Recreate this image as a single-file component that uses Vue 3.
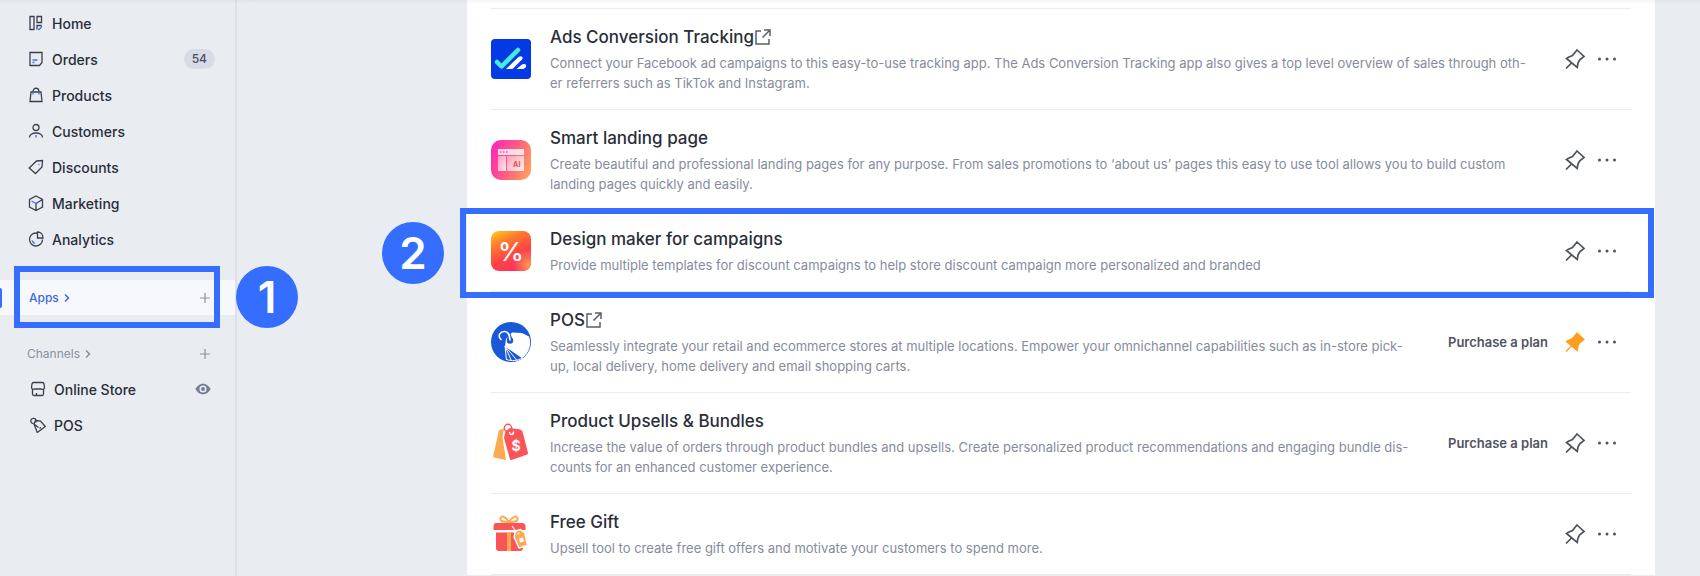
<script setup>
import { ref } from 'vue'

// Main navigation
const menu = [
  { id: 'home', label: 'Home' },
  { id: 'orders', label: 'Orders', count: 54 },
  { id: 'products', label: 'Products' },
  { id: 'customers', label: 'Customers' },
  { id: 'discounts', label: 'Discounts' },
  { id: 'marketing', label: 'Marketing' },
  { id: 'analytics', label: 'Analytics' }
]

// Installed apps, the descriptions keep their own line breaks
const apps = ref([
  {
    id: 'ads',
    name: 'Ads Conversion Tracking',
    external: true,
    text: 'Connect your Facebook ad campaigns to this easy-to-use tracking app. The Ads Conversion Tracking app also gives a top level overview of sales through oth-\ner referrers such as TikTok and Instagram.'
  },
  {
    id: 'landing',
    name: 'Smart landing page',
    text: 'Create beautiful and professional landing pages for any purpose. From sales promotions to ‘about us’ pages this easy to use tool allows you to build custom\nlanding pages quickly and easily.'
  },
  {
    id: 'design',
    name: 'Design maker for campaigns',
    step: 2,
    text: 'Provide multiple templates for discount campaigns to help store discount campaign more personalized and branded'
  },
  {
    id: 'pos',
    name: 'POS',
    external: true,
    plan: true,
    pinned: true,
    text: 'Seamlessly integrate your retail and ecommerce stores at multiple locations. Empower your omnichannel capabilities such as in-store pick-\nup, local delivery, home delivery and email shopping carts.'
  },
  {
    id: 'bundles',
    name: 'Product Upsells & Bundles',
    plan: true,
    text: 'Increase the value of orders through product bundles and upsells. Create personalized product recommendations and engaging bundle dis-\ncounts for an enhanced customer experience.'
  },
  {
    id: 'gift',
    name: 'Free Gift',
    text: 'Upsell tool to create free gift offers and motivate your customers to spend more.'
  }
])

const togglePin = (app) => {
  app.pinned = !app.pinned
}
</script>

<template>
  <div class="page">
    <aside class="sidebar">
      <nav class="menu">
        <a v-for="item in menu" :key="item.id" href="#" class="menu-item">
          <svg class="menu-icon" viewBox="0 0 16 16">
            <template v-if="item.id === 'home'">
              <path d="M2 1.500h4v13H2zM9 1.500h4.500v6H9zM9 14.500v-4h4.500" />
              <path class="accent" d="M13.500 10.500v1.500l-2.500 2.500h-1" />
            </template>
            <template v-else-if="item.id === 'orders'">
              <path d="M2 1.500h12v10l-2.500 3H2z" />
              <path class="accent" d="M4.500 9h5M4.500 11.500h2" />
            </template>
            <template v-else-if="item.id === 'products'">
              <path d="M3 5h10l1 9.500H2zM5 5c0-5 6-5 6 0" />
              <path class="accent" d="M5 5v2.500M11 5v2.500" />
            </template>
            <template v-else-if="item.id === 'customers'">
              <circle cx="8" cy="4.500" r="3" />
              <path d="M1.500 14.500c0-6 13-6 13 0" />
              <path class="accent" d="M8 12v2.500" />
            </template>
            <template v-else-if="item.id === 'discounts'">
              <path d="M8.500 2l6-.5-.5 6.500-6.500 6.500L1.200 9z" />
              <path class="accent" d="M10.500 5.500h1" />
            </template>
            <template v-else-if="item.id === 'marketing'">
              <path d="M8 1l6.500 3.500v7.500L8 15.500 1.500 12V4.500zM8 8.500v7M8 8.500l6.500-4" />
              <path class="accent" d="M3.500 6L8 8.500l2-1.200" />
            </template>
            <template v-else>
              <path d="M7.500 2a6.500 6.500 0 1 0 7 6.500M9.500 1v6h5.500c0-3.500-2-6-5.500-6zM7.500 2h2" />
              <path class="accent" d="M4 9.500c.5 1.500 1.500 2.500 3 2.800" />
            </template>
          </svg>
          <span>{{ item.label }}</span>
          <span v-if="item.count" class="count">{{ item.count }}</span>
        </a>
      </nav>

      <div class="section active">
        <a href="#" class="section-link">
          Apps
          <svg class="chevron" viewBox="0 0 8 10"><path d="M2 1.500L5.500 5 2 8.500" /></svg>
        </a>
        <button type="button" class="add" aria-label="Add app">
          <svg viewBox="0 0 12 12"><path d="M6 1v10M1 6h10" /></svg>
        </button>
        <div class="frame"></div>
        <span class="step">1</span>
      </div>

      <div class="section">
        <a href="#" class="section-link">
          Channels
          <svg class="chevron" viewBox="0 0 8 10"><path d="M2 1.500L5.500 5 2 8.500" /></svg>
        </a>
        <button type="button" class="add" aria-label="Add channel">
          <svg viewBox="0 0 12 12"><path d="M6 1v10M1 6h10" /></svg>
        </button>
      </div>

      <nav class="menu channels">
        <a href="#" class="menu-item">
          <svg class="menu-icon" viewBox="0 0 16 16">
            <path d="M3.500 1.500h9q1.200 0 1.400 1.200L14.500 6c0 2.200-1.500 2.700-3 2h-7c-1.500.7-3 .2-3-2l.6-3.300Q2.300 1.500 3.500 1.500zM2.500 8.500V13q0 1.500 1.500 1.500h8q1.500 0 1.500-1.500V8.500M6.500 14.500V12" />
          </svg>
          <span>Online Store</span>
          <svg class="eye" viewBox="0 0 18 14">
            <path d="M9 1c4 0 7 3 8.500 6C16 10 13 13 9 13S2 10 .5 7C2 4 5 1 9 1z" />
            <circle cx="9" cy="7" r="4" class="eye-ring" />
            <circle cx="9" cy="7" r="2.200" />
          </svg>
        </a>
        <a href="#" class="menu-item">
          <svg class="menu-icon" viewBox="0 0 16 16">
            <path d="M5.500 3.500l5 .5 4.800 5.500-8 6L4 7z" />
            <path d="M3.500 6.500C1 6.500.5 4.500 1 3c.8-2 4.500-2.200 5 0v2.500M4 7l4.500 3.500M9.500 11.500l1.500-1" />
          </svg>
          <span>POS</span>
        </a>
      </nav>
    </aside>

    <main class="content">
      <ul class="app-list">
        <li v-for="app in apps" :key="app.id" class="app-row">
          <!-- App logos -->
          <svg class="logo" viewBox="0 0 40 40">
            <template v-if="app.id === 'ads'">
              <rect width="40" height="40" rx="4" fill="#0439e6" />
              <path d="M6 23l4.500 4.500L27 11" fill="none" stroke="#43efd4" stroke-width="4.500" stroke-linecap="round" stroke-linejoin="round" />
              <path d="M15 30l12.500-12c2.500-2 5.500 0 3.500 2.500L21.500 30z" fill="#fff" />
              <path d="M25.500 30l5.500-4.500c2.500-1.500 5.500.5 3.500 3l-2 1.500z" fill="#fff" />
            </template>
            <template v-else-if="app.id === 'landing'">
              <defs>
                <linearGradient id="landing-bg" x1="0" y1=".3" x2="1" y2=".7">
                  <stop offset="0" stop-color="#ff2bb4" />
                  <stop offset=".5" stop-color="#ff5c80" />
                  <stop offset="1" stop-color="#ff9d5e" />
                </linearGradient>
                <linearGradient id="landing-pane" x1="0" y1="0" x2="1" y2="1">
                  <stop offset="0" stop-color="#fff" stop-opacity=".45" />
                  <stop offset="1" stop-color="#fff" stop-opacity=".85" />
                </linearGradient>
              </defs>
              <rect width="40" height="40" rx="10" fill="url(#landing-bg)" />
              <rect x="7" y="9" width="26" height="6" fill="#fff" fill-opacity=".8" />
              <path d="M9 12h1.500M12 12h1.500M15 12h1.500" stroke="#ff4f96" stroke-width="1.500" />
              <rect x="7" y="16" width="8" height="15" fill="url(#landing-pane)" />
              <rect x="16" y="16" width="17" height="15" fill="url(#landing-pane)" />
              <text x="22" y="27" class="logo-ai">AI</text>
            </template>
            <template v-else-if="app.id === 'design'">
              <defs>
                <linearGradient id="design-bg" x1=".1" y1="0" x2=".6" y2="1">
                  <stop offset="0" stop-color="#ffc61e" />
                  <stop offset=".3" stop-color="#ff7a2c" />
                  <stop offset=".65" stop-color="#ff4545" />
                  <stop offset="1" stop-color="#ff2f62" />
                </linearGradient>
                <radialGradient id="design-glow" cx=".95" cy=".85" r=".4">
                  <stop offset="0" stop-color="#ff9a50" />
                  <stop offset="1" stop-color="#ff9a50" stop-opacity="0" />
                </radialGradient>
              </defs>
              <rect width="40" height="40" rx="8" fill="url(#design-bg)" />
              <rect width="40" height="40" rx="8" fill="url(#design-glow)" />
              <text x="20" y="30" class="logo-percent">%</text>
            </template>
            <template v-else-if="app.id === 'pos'">
              <circle cx="20" cy="20" r="20" fill="#1a58d8" />
              <path d="M14 24l1-7 6-6.500 10 .5 7 3.500a19 19 0 0 1-6.500 21.500z" fill="#fff" />
              <path d="M14 24l1.500 14M14 24l6.500 15M14 24l12 14.500M14 24l17.500 12M15.500 37.500c5 1.700 11 1.500 16-1.500" fill="none" stroke="#fff" stroke-width="1" />
              <circle cx="19" cy="18.500" r="3.200" fill="#1a58d8" />
              <path d="M14 12c4 0 5 3 5 6" fill="none" stroke="#1a58d8" stroke-width="4" />
              <path d="M10 17.500c-4-4-.5-8.500 4-8 4.500.5 4.500 5 5 8.500" fill="none" stroke="#fff" stroke-width="1.600" stroke-linecap="round" />
            </template>
            <template v-else-if="app.id === 'bundles'">
              <path d="M8 7l5-1.500-1.500 9L15 37 3 34.500q-1-.5-.8-1.500z" fill="#fda94f" />
              <circle cx="17" cy="5" r="3.700" fill="none" stroke="#fb5457" stroke-width="1.400" />
              <path d="M14.500 8L19 5l10.500 1.500 2 2L37 30q.2 1-.8 1.500L20.500 37q-1 .3-1.500-.7L13 15z" fill="#fb5457" />
              <path d="M18.500 9.500c.5 3 4 2.500 4-.5" fill="none" stroke="#fff" stroke-width="1.500" stroke-linecap="round" />
              <text x="25" y="28" class="logo-dollar">$</text>
            </template>
            <template v-else>
              <path d="M18 8c-2-4-8-8-8.500-3.500C9 8 14 8 18 8zM18 8c2-4 8-8 8.500-3.500C27 8 22 8 18 8z" fill="none" stroke="#fda94f" stroke-width="2" />
              <path d="M5 9h26q3.500 0 3.500 4v3h-32v-3q0-4 2.500-4z" fill="#fb5457" />
              <path d="M5 18.500h27V34q0 3-3 3H8q-3 0-3-3z" fill="#fb5457" />
              <path d="M16 18.500h4V37h-4z" fill="#fda94f" />
              <path d="M21 12l5 7" fill="none" stroke="#fff" stroke-width="1.200" />
              <path d="M24.500 17l5-1.500L34 19l2.500 12.500-8.500 2.500-5-11z" fill="#fda94f" stroke="#fff" stroke-width="1.500" stroke-linejoin="round" />
              <circle cx="27.500" cy="19.500" r="1" fill="#fff" />
              <path d="M28 24.500l4-1 1 4-4 1z" fill="#fff" />
            </template>
          </svg>

          <div class="info">
            <h3 class="name">
              <a href="#">{{ app.name }}<svg v-if="app.external" class="external" viewBox="0 0 18 18">
                <path d="M7 3H2v13h13v-5M10 2h6v6M16 2L8.500 9.500" />
              </svg></a>
            </h3>
            <p class="text">{{ app.text }}</p>
          </div>

          <button v-if="app.plan" type="button" class="plan">Purchase a plan</button>
          <div class="actions">
            <button type="button" class="icon-btn" :class="{ pinned: app.pinned }" aria-label="Pin" @click="togglePin(app)">
              <svg viewBox="0 0 24 24">
                <path class="pin-head" d="M14 3l7 6.500-4.500 3.500-1.500 3-.8 4.500L3.500 11.500l2-1.300L9.500 8.500z" />
                <path d="M8.500 16L3 21.500" />
              </svg>
            </button>
            <button type="button" class="icon-btn dots" aria-label="More">
              <svg viewBox="0 0 24 24">
                <circle cx="4.500" cy="12" r="1.500" />
                <circle cx="12" cy="12" r="1.500" />
                <circle cx="19.500" cy="12" r="1.500" />
              </svg>
            </button>
          </div>

          <template v-if="app.step">
            <div class="frame"></div>
            <span class="step">{{ app.step }}</span>
          </template>
        </li>
      </ul>
    </main>
  </div>
</template>

<style>
body {
  background: #e9ecf1;
}
</style>

<style scoped>
.page {
  position: relative;
  display: flex;
  height: 100vh;
  overflow: hidden;
  background: #e9ecf1;
  color: #2a2e39;
  font-family: Inter, 'Liberation Sans', sans-serif;
}

/* Shadow cast by the top bar */
.page::before {
  content: '';
  position: absolute;
  top: 0;
  left: 0;
  right: 0;
  height: 4px;
  z-index: 2;
  background: linear-gradient(rgba(60, 70, 100, 0.06), rgba(60, 70, 100, 0));
}

a {
  color: inherit;
  text-decoration: none;
}

button {
  padding: 0;
  border: none;
  background: none;
  font-family: inherit;
  cursor: pointer;
}

.sidebar {
  flex: none;
  width: 235px;
  padding-top: 5px;
  border-right: 2px solid #dfe1ea;
}

.menu-item {
  display: flex;
  align-items: center;
  gap: 8px;
  height: 36px;
  padding: 0 20px 0 28px;
  font-size: 14px;
  font-weight: 500;
}

.menu-icon {
  width: 16px;
  height: 16px;
  fill: none;
  stroke: #3b4050;
  stroke-width: 1.3;
}

.menu-icon .accent {
  stroke: #4a6fe0;
}

.count {
  margin-left: auto;
  padding: 0 8px;
  border-radius: 10px;
  background: #d7dbe7;
  color: #4a4f60;
  font-size: 12px;
  line-height: 20px;
}

.section {
  position: relative;
  display: flex;
  align-items: center;
  justify-content: space-between;
  height: 35px;
  margin-top: 21px;
  padding: 0 24px 0 27px;
  color: #8a90a2;
  font-size: 12px;
  font-weight: 400;
}

.section.active {
  margin-top: 23px;
  padding-left: 29px;
  background: #f7f8fc;
  color: #3f68e0;
  font-weight: 500;
}

/* Marker of the current section */
.section.active::before {
  content: '';
  position: absolute;
  left: 0;
  top: 8px;
  width: 2px;
  height: 20px;
  border-radius: 0 2px 2px 0;
  background: #356dff;
}

.section-link {
  display: flex;
  align-items: center;
  gap: 4px;
}

.chevron {
  width: 8px;
  height: 10px;
  fill: none;
  stroke: currentColor;
  stroke-width: 1.5;
}

.add {
  display: flex;
}

.add svg {
  width: 12px;
  height: 12px;
  stroke: #8a90a2;
  stroke-width: 1.2;
}

.channels .menu-item {
  padding: 0 24px 0 30px;
}

.eye {
  width: 16px;
  height: 14px;
  margin-left: auto;
  fill: #757d93;
}

.eye-ring {
  fill: #e9ecf1;
}

.content {
  flex: 1;
  min-width: 0;
  padding: 0 45px 0 230px;
}

.app-list {
  margin: 0;
  padding: 8px 24px 0;
  background: #fff;
  list-style: none;
}

.app-row {
  position: relative;
  display: flex;
  align-items: center;
  padding: 16px 8px 16px 0;
  border-bottom: 1px solid #ebecf0;
}

.app-row:first-child {
  border-top: 1px solid #ebecf0;
}

.logo {
  flex: none;
  width: 40px;
  height: 40px;
  margin-right: 19px;
}

.logo-ai {
  fill: #f2566a;
  font-size: 7px;
  font-weight: 800;
}

.logo-percent {
  fill: #fff;
  font-size: 26px;
  font-weight: 500;
  text-anchor: middle;
}

.logo-dollar {
  fill: #fff;
  font-size: 14px;
  font-weight: 700;
  text-anchor: middle;
}

.info {
  flex: 1;
  min-width: 0;
}

.name {
  margin: 0 0 4px;
  font-size: 17px;
  font-weight: 500;
  line-height: 24px;
}

.external {
  width: 18px;
  height: 18px;
  vertical-align: -3px;
  fill: none;
  stroke: #5a5f6c;
  stroke-width: 1.5;
}

.text {
  margin: 0;
  color: #868b9c;
  font-size: 13px;
  line-height: 20px;
  white-space: pre-line;
}

.plan {
  flex: none;
  padding: 0 11px 0 3px;
  color: #50545f;
  font-size: 13px;
  font-weight: 600;
}

.actions {
  display: flex;
  flex: none;
}

.icon-btn {
  display: flex;
  align-items: center;
  justify-content: center;
  width: 32px;
  height: 32px;
}

.icon-btn svg {
  width: 24px;
  height: 24px;
  fill: none;
  stroke: #4d525e;
  stroke-width: 1.7;
}

.icon-btn.pinned svg {
  stroke: #ff9d1c;
  stroke-width: 1.2;
}

.icon-btn.pinned .pin-head {
  fill: #ff9d1c;
}

.icon-btn.dots svg {
  fill: #4d525e;
  stroke: none;
}

/* Tutorial marks laid over the page */
.frame {
  position: absolute;
  box-sizing: border-box;
  border: 6px solid #356dff;
  pointer-events: none;
}

.step {
  position: absolute;
  width: 62px;
  height: 62px;
  border-radius: 50%;
  background: #356dff;
  color: #fff;
  font-size: 44px;
  font-weight: 600;
  line-height: 62px;
  text-align: center;
}

.section .frame {
  top: -14px;
  bottom: -13px;
  left: 14px;
  right: 15px;
}

.section .step {
  top: -14px;
  left: 236px;
}

.app-row .frame {
  top: -3px;
  bottom: -7px;
  left: -31px;
  right: -23px;
}

.app-row .step {
  top: 11px;
  left: -109px;
}
</style>
